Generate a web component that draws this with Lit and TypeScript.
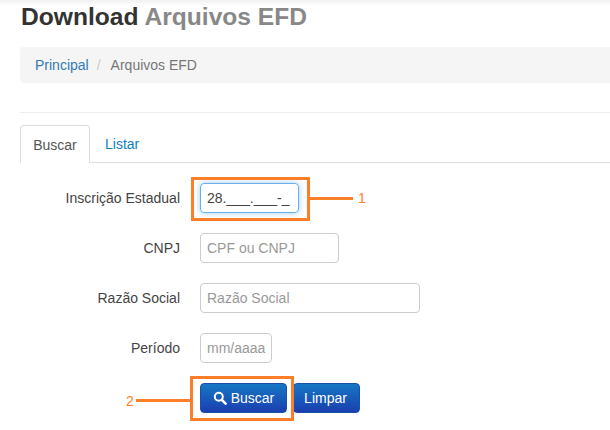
import { LitElement, html, css } from "lit";
import { customElement } from "lit/decorators.js";

@customElement("app-root")
export class AppRoot extends LitElement {
  static styles = css`
    :host { display: block; position: relative; width: 610px; height: 430px; overflow: hidden; background: #fff; font-family: "Liberation Sans", Arial, sans-serif; font-size: 14px; line-height: 20px; color: #333; }
    .shade { position: absolute; left: 0; right: 0; top: 0; height: 6px; background: linear-gradient(#f0f0f0, #fff); }
    .page { display: flex; flex-direction: column; padding-left: 20px; }
    h1 { margin: 0; height: 47px; padding-left: 1px; font-size: 24.6px; line-height: 34px; font-weight: 700; color: #333; position: relative; }
    h1 span { color: #888; }
    .crumb { display: flex; height: 36px; align-items: center; padding: 0 15px; background: #f5f5f5; border-radius: 4px 0 0 4px; color: #777; }
    .crumb a { color: #337ab7; }
    .crumb i { font-style: normal; color: #ccc; margin: 0 10px 0 8px; }
    hr { border: 0; border-top: 1px solid #eee; margin: 29px 0 12px; }
    .tabs { display: flex; box-sizing: border-box; height: 38px; border-bottom: 1px solid #ddd; }
    .tab { padding: 9px 12px; height: 38px; box-sizing: border-box; color: #0f7fc4; margin-left: 3px; }
    .tab.active { color: #555; background: #fff; border: 1px solid #ddd; border-bottom-color: #fff; border-radius: 4px 4px 0 0; margin-left: 0; width: 70px; text-align: center; padding: 9px 0; }
    form { display: flex; flex-direction: column; gap: 20px; padding-top: 20px; }
    .row { display: flex; align-items: center; height: 30px; }
    label { width: 160px; text-align: right; margin-right: 20px; color: #444; }
    .in { box-sizing: border-box; height: 30px; padding: 0 6px; border: 1px solid #ccc; border-radius: 4px; font: inherit; line-height: 28px; color: #999; }
    .in.focus { color: #444; border-color: #66afe9; box-shadow: 0 0 6px rgba(102,175,233,.6); }
    .w1 { width: 99px; }
    .w2 { width: 139px; }
    .w3 { width: 220px; }
    .w4 { width: 72px; padding: 0 4px 0 6px; white-space: nowrap; }
    .btns { display: flex; gap: 6px; margin-left: 180px; }
    .btn { box-sizing: border-box; height: 30px; display: flex; align-items: center; justify-content: center; gap: 4px; color: #fff; border: 1px solid #1a4ea8; border-radius: 4px; background: linear-gradient(#1677c4, #1a3fb0); }
    .btn svg { display: block; }
    .b1 { width: 87px; }
    .b2 { width: 67px; padding-right: 2px; }
    .mark { position: absolute; box-sizing: border-box; border: 3px solid #fd7e28; }
    .m1 { left: 191px; top: 177px; width: 119px; height: 44px; }
    .m2 { left: 190px; top: 376px; width: 104px; height: 45px; }
    .lead { position: absolute; height: 3px; background: #fd7e28; }
    .l1 { left: 310px; top: 197px; width: 43px; }
    .l2 { left: 136px; top: 399px; width: 54px; }
    .num { position: absolute; color: #fd7e28; font-size: 14px; }
    .n1 { left: 358px; top: 188px; }
    .n2 { left: 126px; top: 391px; }
  `;
  render() {
    return html`
      <div class="shade"></div>
      <div class="page">
        <h1>Download <span>Arquivos EFD</span></h1>
        <div class="crumb"><a>Principal</a><i>/</i><span>Arquivos EFD</span></div>
        <hr />
        <div class="tabs">
          <div class="tab active">Buscar</div>
          <div class="tab">Listar</div>
        </div>
        <form>
          <div class="row"><label>Inscrição Estadual</label><div class="in focus w1">28.___.___-_</div></div>
          <div class="row"><label>CNPJ</label><div class="in w2">CPF ou CNPJ</div></div>
          <div class="row"><label>Razão Social</label><div class="in w3">Razão Social</div></div>
          <div class="row"><label>Período</label><div class="in w4">mm/aaaa</div></div>
          <div class="btns">
            <div class="btn b1">
              <svg width="14" height="14" viewBox="0 0 14 14" fill="none" stroke="#fff"><circle cx="5.8" cy="5.8" r="4" stroke-width="2"/><path d="M8.8 8.8L12.6 12.6" stroke-width="2.6" stroke-linecap="round"/></svg>
              Buscar
            </div>
            <div class="btn b2">Limpar</div>
          </div>
        </form>
      </div>
      <div class="mark m1"></div>
      <div class="lead l1"></div>
      <div class="num n1">1</div>
      <div class="mark m2"></div>
      <div class="lead l2"></div>
      <div class="num n2">2</div>
    `;
  }
}
